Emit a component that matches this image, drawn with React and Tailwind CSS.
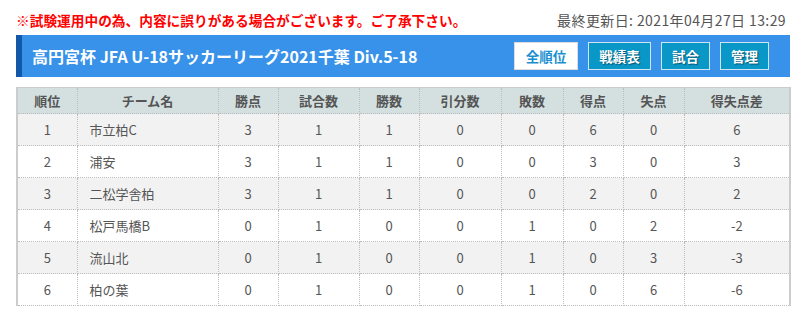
import React from 'react';

const rows = [
  { rank: 1, team: '市立柏C', pts: 3, played: 1, win: 1, draw: 0, lose: 0, gf: 6, ga: 0, gd: 6 },
  { rank: 2, team: '浦安', pts: 3, played: 1, win: 1, draw: 0, lose: 0, gf: 3, ga: 0, gd: 3 },
  { rank: 3, team: '二松学舎柏', pts: 3, played: 1, win: 1, draw: 0, lose: 0, gf: 2, ga: 0, gd: 2 },
  { rank: 4, team: '松戸馬橋B', pts: 0, played: 1, win: 0, draw: 0, lose: 1, gf: 0, ga: 2, gd: -2 },
  { rank: 5, team: '流山北', pts: 0, played: 1, win: 0, draw: 0, lose: 1, gf: 0, ga: 3, gd: -3 },
  { rank: 6, team: '柏の葉', pts: 0, played: 1, win: 0, draw: 0, lose: 1, gf: 0, ga: 6, gd: -6 },
];

const headers = ['順位', 'チーム名', '勝点', '試合数', '勝数', '引分数', '敗数', '得点', '失点', '得失点差'];
const widths = [60, 141, 60, 81, 60, 82, 62, 60, 61, 106];

const cell = 'border-r border-b border-dotted border-[#bdbdbd] last:border-r-0';

export default function App() {
  return (
    <div
      className="w-[807px] h-[321px] bg-white px-4 text-[#555]"
      style={{ fontFamily: '"Noto Sans CJK JP", "Noto Sans", sans-serif' }}
    >
      {/* Notice */}
      <div className="flex items-center justify-between pt-[11px] h-[35px] pb-[6px]">
        <p className="text-[13.7px] font-bold text-[#ff0000] leading-[18px]">
          ※試験運用中の為、内容に誤りがある場合がございます。ご了承下さい。
        </p>
        <p className="text-[14px] tracking-[0.4px] text-[#555] leading-[18px] pr-[5px]">
          最終更新日: 2021年04月27日 13:29
        </p>
      </div>

      {/* Title bar */}
      <div className="w-[774px] h-[42px] bg-[#3892e9] border-l-[6px] border-[#1158a8] flex items-center justify-between pl-[10px] pr-[21px]">
        <h1 className="text-[16px] font-bold text-white leading-none">
          高円宮杯 JFA U-18サッカーリーグ2021千葉 Div.5-18
        </h1>
        <div className="flex items-center gap-[10px]">
          <button className="h-[28px] w-[64px] bg-white border border-[#ddd] text-[#1b8fd0] text-[13.5px] font-bold">
            全順位
          </button>
          <button className="h-[28px] w-[63px] bg-[#0897c7] border border-[#cfe6f2] text-white text-[13.5px] font-bold [text-shadow:1px_1px_1px_rgba(0,0,0,0.45)]">
            戦績表
          </button>
          <button className="h-[28px] w-[49px] bg-[#0897c7] border border-[#cfe6f2] text-white text-[13.5px] font-bold [text-shadow:1px_1px_1px_rgba(0,0,0,0.45)]">
            試合
          </button>
          <button className="h-[28px] w-[49px] bg-[#0897c7] border border-[#cfe6f2] text-white text-[13.5px] font-bold [text-shadow:1px_1px_1px_rgba(0,0,0,0.45)]">
            管理
          </button>
        </div>
      </div>

      {/* Standings table */}
      <table className="mt-[10px] w-[773px] table-fixed border-collapse border-x-2 border-t border-solid border-[#cccccc] text-[13px]">
        <colgroup>
          {widths.map((w, i) => (
            <col key={i} style={{ width: w }} />
          ))}
        </colgroup>
        <thead>
          <tr className="bg-[#d4e0e0] h-[26px]">
            {headers.map((h) => (
              <th key={h} className={`${cell} font-bold text-[#555] text-center`}>
                {h}
              </th>
            ))}
          </tr>
        </thead>
        <tbody>
          {rows.map((r, i) => (
            <tr key={r.rank} className={`h-[32px] ${i % 2 === 0 ? 'bg-[#f2f2f2]' : 'bg-white'}`}>
              <td className={`${cell} text-center`}>{r.rank}</td>
              <td className={`${cell} text-left pl-3`}>{r.team}</td>
              <td className={`${cell} text-center`}>{r.pts}</td>
              <td className={`${cell} text-center`}>{r.played}</td>
              <td className={`${cell} text-center`}>{r.win}</td>
              <td className={`${cell} text-center`}>{r.draw}</td>
              <td className={`${cell} text-center`}>{r.lose}</td>
              <td className={`${cell} text-center`}>{r.gf}</td>
              <td className={`${cell} text-center`}>{r.ga}</td>
              <td className={`${cell} text-center`}>{r.gd}</td>
            </tr>
          ))}
        </tbody>
      </table>
    </div>
  );
}
